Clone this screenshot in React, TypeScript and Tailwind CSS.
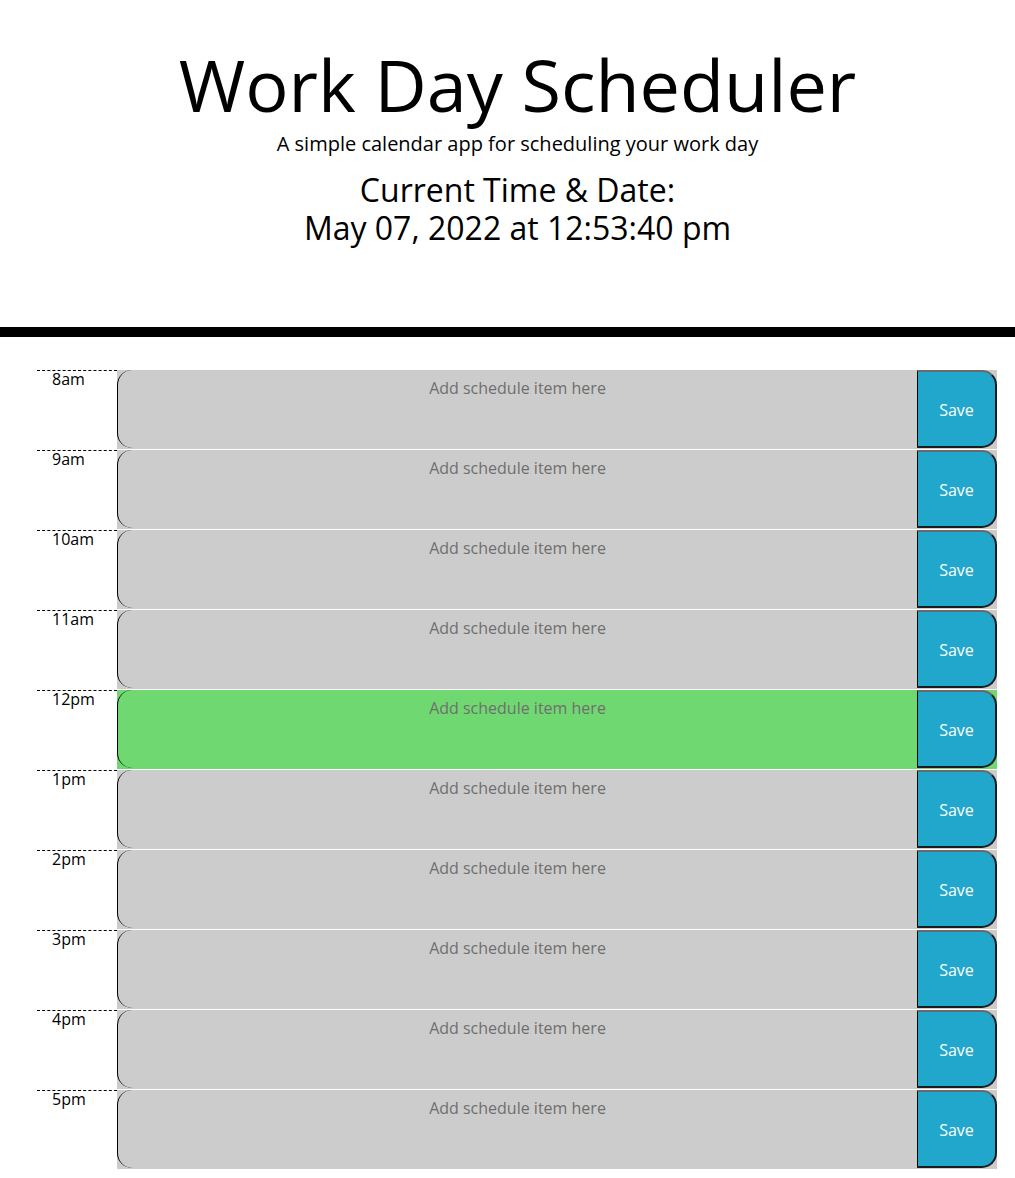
import React from "react";

const hours = ["8am", "9am", "10am", "11am", "12pm", "1pm", "2pm", "3pm", "4pm", "5pm"];

export default function App() {
  return (
    <div className="min-h-[1178px] bg-white text-black font-['Open_Sans',_'Noto_Sans',_sans-serif]">
      <header className="pl-[20px] pt-[41px] text-center">
        <h1 className="text-[72px] leading-[86px] font-normal">Work Day Scheduler</h1>
        <p className="mt-[2px] text-[20px] leading-[30px]">A simple calendar app for scheduling your work day</p>
        <div className="mt-[12px] text-[32px] leading-[38px]">
          <div>Current Time &amp; Date:</div>
          <div>May 07, 2022 at 12:53:40 pm</div>
        </div>
      </header>
      <div className="mt-[80px] h-[10px] bg-black" />
      <div className="ml-[37px] mt-[33px] w-[960px]">
        {hours.map((h) => {
          const present = h === "12pm";
          return (
            <div key={h} className="flex h-[80px]">
              <div className="w-[80px] shrink-0 border-t border-dashed border-black bg-white pl-[15px] text-[16px] leading-[17px]">
                {h}
              </div>
              <div
                className={
                  "flex flex-1 items-start border-b border-white " +
                  (present ? "bg-[#6fd870]" : "bg-[#cccccc]")
                }
              >
                <textarea
                  placeholder="Add schedule item here"
                  className="h-[78px] w-[800px] resize-none rounded-l-[15px] border-0 border-l border-black bg-transparent px-[10px] pt-[6px] text-center text-[16px] leading-6 text-black outline-none placeholder:text-[#6f6f6f]"
                />
                <button className="flex h-[78px] w-[80px] shrink-0 items-center justify-center rounded-r-[15px] border-b-2 border-l border-r-2 border-t-2 border-b-[#1c1c1c] border-l-black border-r-[#1c1c1c] border-t-[#6a6a6a] bg-[#21a7cc] pt-[1px] text-[16px] text-white">
                  Save
                </button>
              </div>
            </div>
          );
        })}
      </div>
    </div>
  );
}
